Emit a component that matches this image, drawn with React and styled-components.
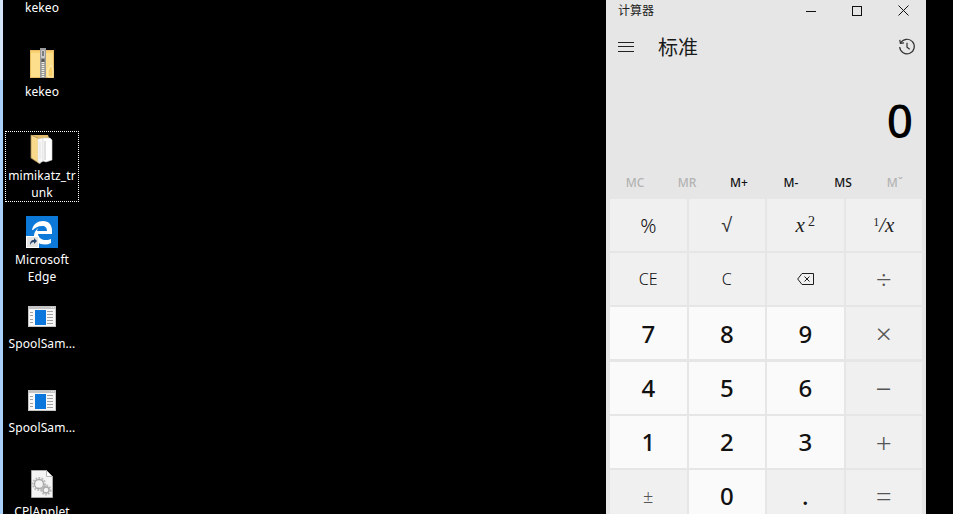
import styled, { createGlobalStyle } from "styled-components";

const GlobalStyle = createGlobalStyle`
  html, body {
    margin: 0;
    height: 100%;
    background: #000;
    overflow: hidden;
  }
  #root {
    height: 100%;
  }
`;

const ZipIcon = () => (
  <svg width="24" height="32" viewBox="0 0 24 32">
    <rect x="0.500" y="2.500" width="23" height="27" fill="#fdde8c" stroke="#e8bd62" />
    <path d="M1 3h22v2H1z" fill="#fbd070" />
    <path d="M18 29v-7l1-2 2-3 2 4v8z" fill="#fbd26a" stroke="#fff3c9" strokeWidth="0.800" />
    <rect x="10" y="0" width="6" height="30" fill="#9a9a9a" />
    <rect x="11" y="2" width="4" height="8" rx="1" fill="#c9c9c9" />
    <rect x="12" y="3" width="2" height="5" fill="#7d7d7d" />
    <rect x="11.500" y="11" width="3" height="3" fill="#555" />
    <path d="M13 14v15" stroke="#f4f1e0" strokeWidth="2.500" strokeDasharray="1 1" />
  </svg>
);

const FolderIcon = () => (
  <svg width="32" height="32" viewBox="0 0 32 32">
    <path d="M5 3h17l1 3v6H5z" fill="#e2bc6c" />
    <path d="M5 3l9 4v25l-9-6z" fill="#f8d98c" stroke="#a98f5a" strokeWidth="0.800" />
    <path d="M12 7l7-1v22l-5 3-2-1z" fill="#f7f7f7" stroke="#d8d8d8" strokeWidth="0.500" />
    <path d="M17 6h7l2 2v20l-6 2-3-1z" fill="#ffffff" stroke="#cfcfcf" strokeWidth="0.600" />
    <path d="M19 9v19" stroke="#c4c4c4" />
    <path d="M14 10v17" stroke="#e2e2e2" />
  </svg>
);

const EdgeIcon = () => (
  <svg width="32" height="32" viewBox="0 0 32 32">
    <rect width="32" height="32" fill="#0c78d7" />
    <path
      d="M6 14C7 8 12 5 17 5c6 0 9 4 9 10v3H12c.5 4 4 6 8 6 2 0 4-.5 5-1v4c-2 1-4 1.500-6 1.500-6 0-11-3-11-9 0-3 2-6 5-8-1 1-2 2.500-2 3.500h10c0-3-1.500-5-5-5-4 0-7 2-9 4z"
      fill="#ffffff"
    />
    <rect y="20" width="12" height="12" fill="#e2e2e2" />
    <rect x="0.500" y="20.500" width="12" height="11" fill="none" stroke="#ffffff" />
    <path d="M4 29c0-3 1-5 4-5v-2l3 3-3 3v-2c-2 0-3 1-4 3z" fill="#27466f" />
  </svg>
);

const WindowIcon = () => (
  <svg width="28" height="21" viewBox="0 0 28 21">
    <rect width="28" height="21" fill="#c4c4c4" />
    <rect x="1" y="3" width="26" height="17" fill="#f7f7f7" />
    <rect x="23" y="1" width="1" height="1" fill="#eeeeee" />
    <rect x="25" y="1" width="1" height="1" fill="#eeeeee" />
    <rect x="7" y="4" width="11" height="15" fill="#0b77dc" />
    <path
      d="M2 6.500h3M2 9.500h3M2 13.500h3M2 16.500h3M19 5.500h6M19 8.500h6M19 11.500h6M19 14.500h6M19 17.500h6"
      stroke="#a0a0a0"
    />
  </svg>
);

const Gear = ({ cx, cy, r }) => (
  <g>
    <circle cx={cx} cy={cy} r={r} fill="none" stroke="#bdbdbd" strokeWidth="2.200" strokeDasharray="1.800 1.200" />
    <circle cx={cx} cy={cy} r={r - 1.500} fill="none" stroke="#a8a8a8" strokeWidth="1.300" />
    <circle cx={cx} cy={cy} r={r - 3} fill="#f4f4f4" />
  </g>
);

const ConfigFileIcon = () => (
  <svg width="22" height="28" viewBox="0 0 22 28">
    <path d="M.5.5h15l6 6v21H.5z" fill="#f4f4f4" stroke="#a8a8a8" />
    <path d="M15.500.5v6h6z" fill="#ffffff" stroke="#b5b5b5" />
    <Gear cx={8} cy={14} r={6} />
    <Gear cx={15} cy={20} r={4.500} />
  </svg>
);

const HistoryIcon = () => (
  <svg width="18" height="18" viewBox="0 0 18 18" fill="none" stroke="#303030" strokeWidth="1.200">
    <path d="M2.600 5A7.300 7.300 0 1 1 1.700 9" />
    <path d="M1.800 1.800 2.400 5.400 6 4.800" />
    <path d="M9 4.800V9.300l2.700 2" />
  </svg>
);

const BackspaceIcon = () => (
  <svg width="17" height="12" viewBox="0 0 17 12" fill="none" stroke="#1f1f1f" strokeWidth="1">
    <path d="M5 .5h11.500v11H5L.7 6z" />
    <path d="M7.500 3.500l5 5M12.500 3.500l-5 5" />
  </svg>
);

const desktopItems = [
  { label: "kekeo" },
  { label: "kekeo", icon: <ZipIcon /> },
  { label: "mimikatz_trunk", icon: <FolderIcon />, selected: true },
  { label: "Microsoft Edge", icon: <EdgeIcon /> },
  { label: "SpoolSam...", icon: <WindowIcon /> },
  { label: "SpoolSam...", icon: <WindowIcon /> },
  { label: "CPlApplet", icon: <ConfigFileIcon /> },
];

const memoryKeys = [
  { label: "MC", off: true },
  { label: "MR", off: true },
  { label: "M+" },
  { label: "M-" },
  { label: "MS" },
  { label: "Mˇ", off: true },
];

const keys = [
  { label: "%", thin: true },
  { label: <RootGlyph>√</RootGlyph> },
  { label: <MathLabel>x<sup>2</sup></MathLabel> },
  { label: <MathLabel><b>1</b>/x</MathLabel> },
  { label: "CE", small: true },
  { label: "C", small: true },
  { label: <BackspaceIcon /> },
  { label: "÷", soft: true },
  { label: "7", digit: true },
  { label: "8", digit: true },
  { label: "9", digit: true },
  { label: "×", soft: true },
  { label: "4", digit: true },
  { label: "5", digit: true },
  { label: "6", digit: true },
  { label: "−", soft: true },
  { label: "1", digit: true },
  { label: "2", digit: true },
  { label: "3", digit: true },
  { label: "+", soft: true },
  { label: "±", soft: true, smallGlyph: true },
  { label: "0", digit: true },
  { label: ".", digit: true, plain: true },
  { label: "=", soft: true },
];

function MathLabel({ children }) {
  return <MathText>{children}</MathText>;
}

function RootGlyph({ children }) {
  return <RootText>{children}</RootText>;
}

const App = () => (
  <Screen>
    <GlobalStyle />
    <EdgeStrip />
    <Desktop>
      {desktopItems.map((item, i) => (
        <DesktopItem key={i} $selected={item.selected}>
          <IconSlot>{item.icon}</IconSlot>
          <ItemLabel>{item.label}</ItemLabel>
        </DesktopItem>
      ))}
    </Desktop>
    <Calculator>
      <TitleBar>
        <WindowTitle>计算器</WindowTitle>
        <WindowButtons>
          <WindowButton>
            <svg width="10" height="10" viewBox="0 0 10 10"><path d="M0 5.500h10" stroke="#111" /></svg>
          </WindowButton>
          <WindowButton>
            <svg width="10" height="10" viewBox="0 0 10 10"><rect x=".5" y=".5" width="9" height="9" fill="none" stroke="#111" /></svg>
          </WindowButton>
          <WindowButton>
            <svg width="11" height="11" viewBox="0 0 11 11"><path d="M.5.500l10 10M10.500.500l-10 10" stroke="#111" /></svg>
          </WindowButton>
        </WindowButtons>
      </TitleBar>
      <ModeBar>
        <Hamburger>
          <svg width="16" height="10" viewBox="0 0 16 10"><path d="M0 .5h16M0 4.500h16M0 9.500h16" stroke="#222" /></svg>
        </Hamburger>
        <ModeTitle>标准</ModeTitle>
        <HistoryButton><HistoryIcon /></HistoryButton>
      </ModeBar>
      <Display>0</Display>
      <MemoryRow>
        {memoryKeys.map((key) => (
          <MemoryKey key={key.label} $off={key.off}>{key.label}</MemoryKey>
        ))}
      </MemoryRow>
      <Keypad>
        {keys.map((key, i) => (
          <Key
            key={i}
            $digit={key.digit}
            $soft={key.soft}
            $small={key.small}
            $plain={key.plain}
            $thin={key.thin}
            $smallGlyph={key.smallGlyph}
          >
            {key.label}
          </Key>
        ))}
      </Keypad>
    </Calculator>
  </Screen>
);

const Screen = styled.div`
  display: flex;
  height: 514px;
  overflow: hidden;
  background: #000;
`;

const EdgeStrip = styled.div`
  width: 3px;
  flex-shrink: 0;
  background: linear-gradient(#d3e6fa 0, #d3e6fa 80px, #a9d0f8 80px, #a9d0f8 100%);
`;

const Desktop = styled.div`
  box-sizing: border-box;
  width: 603px;
  flex-shrink: 0;
  display: flex;
  flex-direction: column;
  align-items: flex-start;
  margin-top: -37px;
  padding-left: 2px;
`;

const DesktopItem = styled.div`
  box-sizing: border-box;
  width: 74px;
  height: ${(p) => (p.$selected ? "71px" : "84px")};
  margin-bottom: ${(p) => (p.$selected ? "13px" : "0")};
  flex-shrink: 0;
  padding-top: ${(p) => (p.$selected ? "0" : "1px")};
  display: flex;
  flex-direction: column;
  align-items: center;
  border: ${(p) => (p.$selected ? "1px dotted #fff" : "none")};
`;

const IconSlot = styled.div`
  height: 32px;
  margin-bottom: 3px;
  display: flex;
  align-items: center;
  justify-content: center;
`;

const ItemLabel = styled.div`
  width: 70px;
  font: 12px/17px "Noto Sans", sans-serif;
  letter-spacing: 0.1px;
  color: #fff;
  text-align: center;
  overflow-wrap: anywhere;
`;

const Calculator = styled.div`
  width: 320px;
  flex-shrink: 0;
  height: 514px;
  overflow: hidden;
  background: #e6e6e6;
  display: flex;
  flex-direction: column;
`;

const TitleBar = styled.div`
  height: 21px;
  flex-shrink: 0;
  display: flex;
  align-items: center;
  justify-content: space-between;
`;

const WindowTitle = styled.span`
  padding: 0 0 2px 12px;
  font: 12px "Noto Sans CJK SC", sans-serif;
  color: #222;
`;

const WindowButtons = styled.div`
  display: flex;
`;

const WindowButton = styled.div`
  width: 46px;
  height: 21px;
  display: flex;
  align-items: center;
  justify-content: center;
`;

const ModeBar = styled.div`
  box-sizing: border-box;
  height: 52px;
  flex-shrink: 0;
  padding: 0 10px 1px 12px;
  display: flex;
  align-items: center;
`;

const Hamburger = styled.div`
  display: flex;
  margin-right: 24px;
`;

const ModeTitle = styled.div`
  flex: 1;
  font: 20px "Noto Sans CJK SC", sans-serif;
  color: #1a1a1a;
`;

const HistoryButton = styled.div`
  display: flex;
`;

const Display = styled.div`
  box-sizing: border-box;
  height: 96px;
  flex-shrink: 0;
  padding: 0 13px 2px 0;
  display: flex;
  align-items: center;
  justify-content: flex-end;
  font: 500 46px "Noto Sans", sans-serif;
  color: #000;
`;

const MemoryRow = styled.div`
  box-sizing: border-box;
  height: 30px;
  flex-shrink: 0;
  padding: 0 5px 4px 3px;
  display: grid;
  grid-template-columns: repeat(6, 1fr);
  align-items: center;
`;

const MemoryKey = styled.div`
  text-align: center;
  font: 500 12px "Noto Sans", sans-serif;
  color: ${(p) => (p.$off ? "#b3b3b3" : "#111")};
`;

const Keypad = styled.div`
  flex-shrink: 0;
  padding: 0 4px;
  display: grid;
  grid-template-columns: repeat(4, 76.500px);
  grid-auto-rows: 52px;
  gap: 2.200px 2px;
`;

const keyFontSize = (p) => {
  if (p.$digit) return "24px";
  if (p.$smallGlyph) return "18px";
  if (p.$soft) return "28px";
  if (p.$small) return "16px";
  return "20px";
};

const Key = styled.div`
  display: flex;
  align-items: center;
  justify-content: center;
  background: ${(p) => (p.$digit && !p.$plain ? "#fafafa" : "#f0f0f0")};
  color: ${(p) => (p.$soft ? "#555" : "#111")};
  font-family: "Noto Sans", sans-serif;
  font-size: ${keyFontSize};
  font-weight: ${(p) => {
    if (p.$digit) return 500;
    return p.$soft || p.$thin || p.$small ? 300 : 400;
  }};
`;

const RootText = styled.span`
  font: 20px "Liberation Sans", sans-serif;
  color: #333;
`;

const MathText = styled.span`
  font: italic 21px "Liberation Serif", serif;
  color: #222;

  sup {
    font-size: 14px;
    font-style: normal;
    margin-left: 3px;
    vertical-align: 6px;
    line-height: 0;
  }

  b {
    font-size: 12px;
    font-weight: 400;
    font-style: normal;
    vertical-align: 6px;
    line-height: 0;
  }
`;

export default App;
